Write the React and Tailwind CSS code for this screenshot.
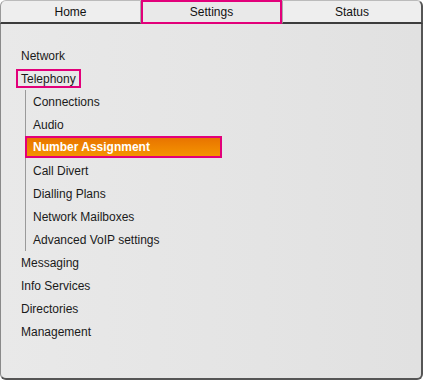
const subItems = [
  "Connections",
  "Audio",
  "Number Assignment",
  "Call Divert",
  "Dialling Plans",
  "Network Mailboxes",
  "Advanced VoIP settings",
];

const bottomItems = ["Messaging", "Info Services", "Directories", "Management"];

function Tab({ label, active, className = "" }) {
  if (active) {
    return (
      <div className="w-[141px] h-[24px] border-2 border-[#e2007a] bg-[#e9e9e9] flex items-center justify-center text-[12px] text-[#111]">
        {label}
      </div>
    );
  }
  return (
    <div
      className={
        "h-[24px] flex items-center justify-center bg-[#eeeeee] border-t border-[#bbbbbb] border-b-2 border-b-[#3c3c3c] text-[12px] text-[#111] " +
        className
      }
    >
      {label}
    </div>
  );
}

export default function App() {
  return (
    <div className="w-[423px] h-[380px] flex flex-col bg-white font-['Liberation_Sans',Arial,sans-serif]">
      <div className="flex h-[24px]">
        <Tab label="Home" className="w-[141px] rounded-tl-[6px] border-l border-l-[#999] border-r border-r-[#aaa]" />
        <Tab label="Settings" active />
        <Tab label="Status" className="flex-1 rounded-tr-[6px] border-r-2 border-r-[#555] border-l border-l-[#aaa]" />
      </div>
      <div className="flex-1 bg-gradient-to-r from-[#e9e9e9] to-[#e1e1e1] border-l border-[#8a8a8a] border-r-2 border-r-[#555] border-b-2 border-b-[#555] rounded-b-[6px] pt-[20px] text-[12px] text-[#1a1a1a]">
        <div className="h-[23px] flex items-center pl-[20px]">Network</div>
        <div className="h-[23px] flex items-center pl-[15px]">
          <span className="h-[19px] flex items-center border-2 border-[#e2007a] px-[3px]">Telephony</span>
        </div>
        <div className="ml-[24px] border-l border-[#9a9a9a]">
          {subItems.map((item) =>
            item === "Number Assignment" ? (
              <div key={item} className="h-[23px] flex items-start">
                <div className="-ml-px w-[197px] h-[22px] flex items-center pl-[6px] border-2 border-[#e2007a] bg-gradient-to-b from-[#e87400] to-[#f59400] text-white font-bold">
                  {item}
                </div>
              </div>
            ) : (
              <div key={item} className="h-[23px] flex items-center pl-[7px]">
                {item}
              </div>
            )
          )}
        </div>
        {bottomItems.map((item) => (
          <div key={item} className="h-[23px] flex items-center pl-[20px]">
            {item}
          </div>
        ))}
      </div>
    </div>
  );
}
